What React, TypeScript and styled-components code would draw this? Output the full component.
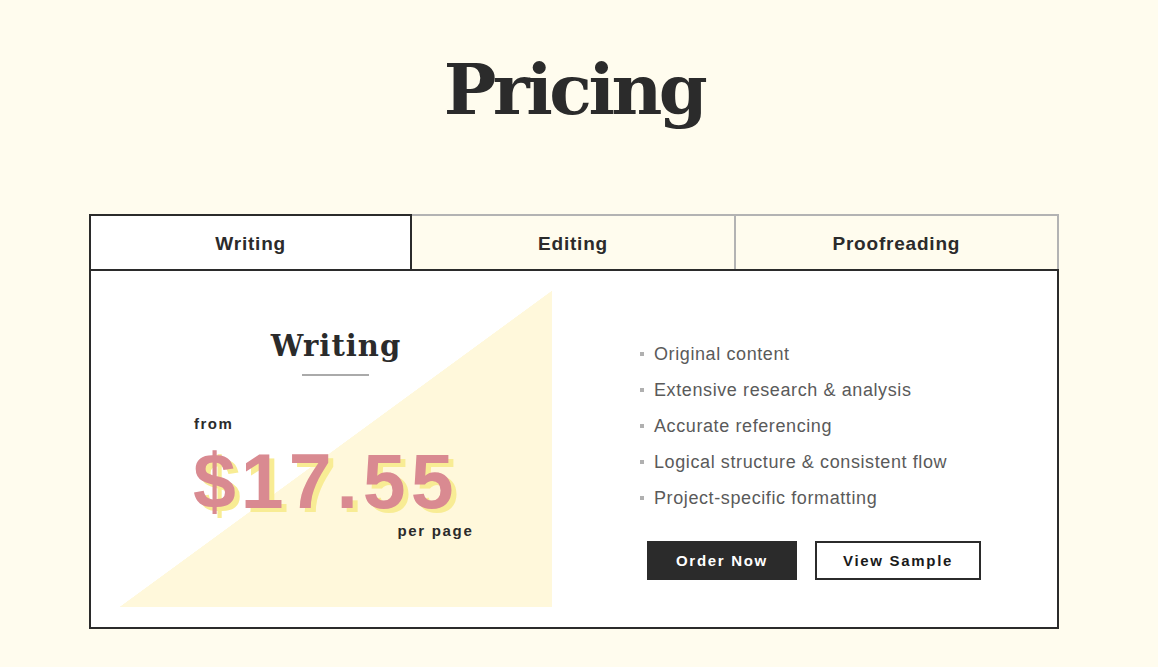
import React from "react";
import styled, { createGlobalStyle } from "styled-components";

const Global = createGlobalStyle`
  html, body { margin: 0; padding: 0; background: #fffcee; }
  body { font-family: "Liberation Sans", Arial, sans-serif; }
`;

const Page = styled.div`
  padding-top: 40px;
  min-height: 667px;
  box-sizing: border-box;
`;

const Wrapper = styled.div`
  width: 970px;
  margin-left: 89px;
`;

const Title = styled.h1`
  margin: 0 0 74px;
  text-align: center;
  font-family: "DejaVu Serif", "Liberation Serif", serif;
  font-weight: 700;
  font-size: 70px;
  line-height: 100px;
  letter-spacing: -3.5px;
  color: #2b2b2b;
`;

const Tabs = styled.div`
  display: grid;
  grid-template-columns: repeat(3, 1fr);
`;

const Tab = styled.button<{ $active?: boolean }>`
  height: 55px;
  box-sizing: border-box;
  border: 2px solid ${(p) => (p.$active ? "#2b2b2b" : "#b3b3b3")};
  border-bottom: none;
  margin-left: -2px;
  &:first-child { margin-left: 0; }
  background: ${(p) => (p.$active ? "#ffffff" : "#fffcee")};
  position: relative;
  z-index: ${(p) => (p.$active ? 1 : 0)};
  font-family: "Liberation Sans", Arial, sans-serif;
  font-weight: 700;
  font-size: 19px;
  letter-spacing: 0.8px;
  color: #2b2b2b;
  padding: 2px 0 0;
  cursor: pointer;
`;

const Panel = styled.div`
  display: flex;
  border: 2px solid #2b2b2b;
  background: #ffffff;
  padding: 20px 29px 20px;
`;

const Visual = styled.div`
  width: 432px;
  height: 316px;
  flex-shrink: 0;
  background: linear-gradient(to top left, #fff8db 50%, transparent 50.1%);
  display: flex;
  flex-direction: column;
  align-items: center;
  padding-top: 37px;
  box-sizing: border-box;
`;

const Heading = styled.h2`
  margin: 0;
  font-family: "DejaVu Serif", "Liberation Serif", serif;
  font-weight: 700;
  font-size: 29px;
  line-height: 36px;
  letter-spacing: 1px;
  color: #2b2b2b;
`;

const Rule = styled.div`
  width: 67px;
  height: 2px;
  background: #aaaaaa;
  margin-top: 10px;
  margin-left: -2px;
`;

const PriceBlock = styled.div`
  align-self: flex-start;
  display: flex;
  flex-direction: column;
  margin-top: 39px;
  margin-left: 73px;
`;

const Small = styled.span<{ $right?: boolean }>`
  align-self: ${(p) => (p.$right ? "flex-end" : "flex-start")};
  font-weight: 700;
  font-size: 15px;
  line-height: 18px;
  letter-spacing: ${(p) => (p.$right ? "1.7px" : "1.5px")};
  color: #2b2b2b;
  margin-left: 1px;
`;

const Price = styled.div`
  font-weight: 700;
  font-size: 77px;
  line-height: 76px;
  letter-spacing: 5px;
  color: #d98a91;
  text-shadow: 5px 4px 0 #f8ec94;
  margin: 10px 15px 3px 0;
`;

const Details = styled.div`
  flex: 1;
  padding-left: 88px;
  padding-top: 45px;
`;

const List = styled.ul`
  list-style: none;
  margin: 0;
  padding: 0;
`;

const Item = styled.li`
  display: flex;
  align-items: center;
  gap: 10px;
  height: 36px;
  font-size: 18px;
  letter-spacing: 0.6px;
  color: #5a5a5a;
  &::before {
    content: "";
    width: 4px;
    height: 4px;
    background: #b0b0b0;
    flex-shrink: 0;
  }
`;

const Actions = styled.div`
  display: flex;
  gap: 18px;
  margin-top: 25px;
  margin-left: 7px;
`;

const Button = styled.button<{ $primary?: boolean }>`
  height: 39px;
  box-sizing: border-box;
  padding: 0 ${(p) => (p.$primary ? "27px" : "26px")};
  border: 2px solid #2b2b2b;
  background: ${(p) => (p.$primary ? "#2b2b2b" : "#ffffff")};
  color: ${(p) => (p.$primary ? "#ffffff" : "#1a1a1a")};
  font-family: "Liberation Sans", Arial, sans-serif;
  font-weight: 700;
  font-size: 15px;
  letter-spacing: 1.7px;
  cursor: pointer;
`;

const features = [
  "Original content",
  "Extensive research & analysis",
  "Accurate referencing",
  "Logical structure & consistent flow",
  "Project-specific formatting",
];

export default function App() {
  return (
    <Page>
      <Global />
      <Wrapper>
        <Title>Pricing</Title>
        <Tabs>
          <Tab $active>Writing</Tab>
          <Tab>Editing</Tab>
          <Tab>Proofreading</Tab>
        </Tabs>
        <Panel>
          <Visual>
            <Heading>Writing</Heading>
            <Rule />
            <PriceBlock>
              <Small>from</Small>
              <Price>$17.55</Price>
              <Small $right>per page</Small>
            </PriceBlock>
          </Visual>
          <Details>
            <List>
              {features.map((f) => (
                <Item key={f}>{f}</Item>
              ))}
            </List>
            <Actions>
              <Button $primary>Order Now</Button>
              <Button>View Sample</Button>
            </Actions>
          </Details>
        </Panel>
      </Wrapper>
    </Page>
  );
}
